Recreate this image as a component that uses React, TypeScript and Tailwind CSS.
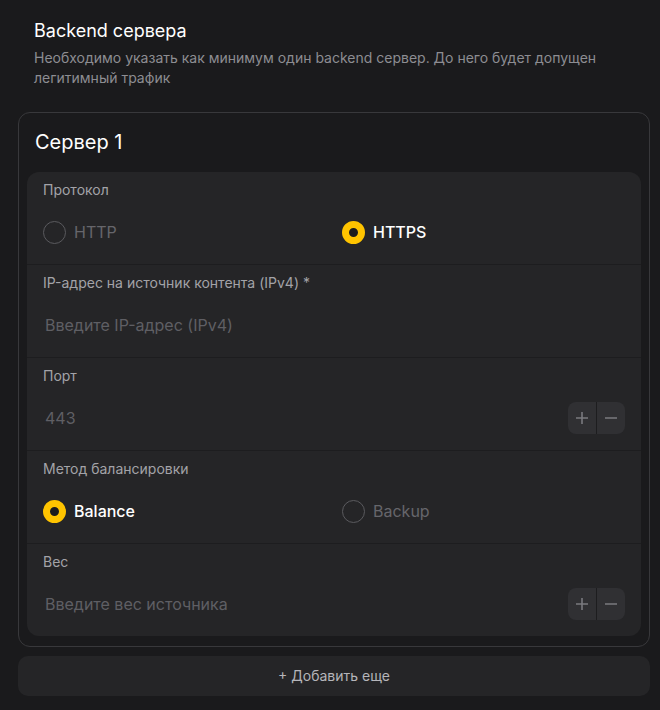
import React, { useState } from "react";

function Radio({ label, checked, onClick }: { label: string; checked: boolean; onClick: () => void }) {
  return (
    <button type="button" onClick={onClick} className="flex items-center gap-2 text-left">
      {checked ? (
        <span className="h-[23px] w-[23px] rounded-full border-[7px] border-[#ffc400] bg-[#1b1b1d]" />
      ) : (
        <span className="h-[23px] w-[23px] rounded-full border border-[#5a5a5e]" />
      )}
      <span className={checked ? "text-base font-medium text-white" : "text-base text-[#66666b]"}>{label}</span>
    </button>
  );
}

function Stepper() {
  return (
    <div className="flex h-8 overflow-hidden rounded-lg bg-[#303033]">
      <button type="button" className="flex w-7 items-center justify-center text-[#7a7a7f]">
        <svg width="14" height="14" viewBox="0 0 14 14" fill="none" stroke="currentColor" strokeWidth="1.6">
          <path d="M7 1v12M1 7h12" />
        </svg>
      </button>
      <div className="w-px bg-[#1d1d1f]" />
      <button type="button" className="flex w-7 items-center justify-center text-[#7a7a7f]">
        <svg width="14" height="14" viewBox="0 0 14 14" fill="none" stroke="currentColor" strokeWidth="1.6">
          <path d="M1 7h12" />
        </svg>
      </button>
    </div>
  );
}

function Row({ label, children }: { label: string; children: React.ReactNode }) {
  return (
    <div className="px-4 pt-2 pb-[10px]">
      <p className="text-sm leading-5 text-[#a3a3a8]">{label}</p>
      <div className="mt-[10px] flex h-11 items-center">{children}</div>
    </div>
  );
}

export default function App() {
  const [proto, setProto] = useState("https");
  const [method, setMethod] = useState("balance");

  return (
    <div className="min-h-[710px] bg-[#1a1a1c] pl-[18px] pr-[10px] pt-[17px] font-['Inter',sans-serif]">
      <div className="px-4">
        <h2 className="text-lg leading-7 text-white">Backend сервера</h2>
        <p className="mt-[3px] text-sm leading-5 text-[#8d8d92]">
          Необходимо указать как минимум один backend сервер. До него будет допущен легитимный трафик
        </p>
      </div>

      <div className="mt-6 rounded-xl border border-[#38383b] px-2 pt-2 pb-[10px]">
        <div className="h-[51px] px-2 pt-[7px]">
          <h3 className="text-xl leading-7 text-white">Сервер 1</h3>
        </div>
        <div className="divide-y divide-[#1d1d1f] rounded-xl bg-[#252527]">
          <Row label="Протокол">
            <div className="grid w-full grid-cols-2 gap-4">
              <Radio label="HTTP" checked={proto === "http"} onClick={() => setProto("http")} />
              <Radio label="HTTPS" checked={proto === "https"} onClick={() => setProto("https")} />
            </div>
          </Row>
          <Row label="IP-адрес на источник контента (IPv4) *">
            <input
              placeholder="Введите IP-адрес (IPv4)"
              className="w-full bg-transparent pl-0.5 text-base text-white outline-none placeholder:text-[#5f5f64]"
            />
          </Row>
          <Row label="Порт">
            <input
              placeholder="443"
              className="flex-1 bg-transparent pl-0.5 text-base text-white outline-none placeholder:text-[#5f5f64]"
            />
            <Stepper />
          </Row>
          <Row label="Метод балансировки">
            <div className="grid w-full grid-cols-2 gap-4">
              <Radio label="Balance" checked={method === "balance"} onClick={() => setMethod("balance")} />
              <Radio label="Backup" checked={method === "backup"} onClick={() => setMethod("backup")} />
            </div>
          </Row>
          <Row label="Вес">
            <input
              placeholder="Введите вес источника"
              className="flex-1 bg-transparent pl-0.5 text-base text-white outline-none placeholder:text-[#5f5f64]"
            />
            <Stepper />
          </Row>
        </div>
      </div>

      <button
        type="button"
        className="mt-[9px] flex h-10 w-full items-center justify-center rounded-[10px] bg-[#252527] text-sm text-[#b5b5ba]"
      >
        + Добавить еще
      </button>
    </div>
  );
}
